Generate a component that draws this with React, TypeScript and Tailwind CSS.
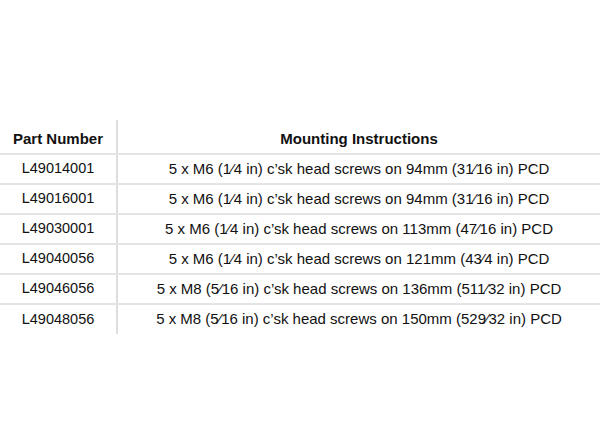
const rows = [
  ['L49014001', '5 x M6 (1\u20444 in) c\u2019sk head screws on 94mm (31\u204416 in) PCD'],
  ['L49016001', '5 x M6 (1\u20444 in) c\u2019sk head screws on 94mm (31\u204416 in) PCD'],
  ['L49030001', '5 x M6 (1\u20444 in) c\u2019sk head screws on 113mm (47\u204416 in) PCD'],
  ['L49040056', '5 x M6 (1\u20444 in) c\u2019sk head screws on 121mm (43\u20444 in) PCD'],
  ['L49046056', '5 x M8 (5\u204416 in) c\u2019sk head screws on 136mm (511\u204432 in) PCD'],
  ['L49048056', '5 x M8 (5\u204416 in) c\u2019sk head screws on 150mm (529\u204432 in) PCD'],
]

export default function App() {
  return (
    <div className="w-[600px] h-[435px] bg-white pt-[120px] text-[#111] font-['Liberation_Sans',Arial,sans-serif]">
      <table className="w-full border-collapse">
        <thead>
          <tr>
            <th className="w-[117px] h-[34px] pt-[6px] border-r-2 border-b-2 border-r-[#dedede] border-b-[#e4e4e4] text-[15px] font-bold text-center">
              Part Number
            </th>
            <th className="h-[34px] pt-[6px] border-b-2 border-b-[#e4e4e4] text-[15px] font-bold text-center">
              Mounting Instructions
            </th>
          </tr>
        </thead>
        <tbody>
          {rows.map(([part, text], i) => (
            <tr key={part}>
              <td
                className={`h-[30px] border-r-2 border-r-[#dedede] text-[14.5px] text-center ${
                  i < rows.length - 1 ? 'border-b-2 border-b-[#e4e4e4]' : ''
                }`}
              >
                {part}
              </td>
              <td
                className={`h-[30px] text-[15px] text-center ${
                  i < rows.length - 1 ? 'border-b-2 border-b-[#e4e4e4]' : ''
                }`}
              >
                {text}
              </td>
            </tr>
          ))}
        </tbody>
      </table>
    </div>
  )
}
